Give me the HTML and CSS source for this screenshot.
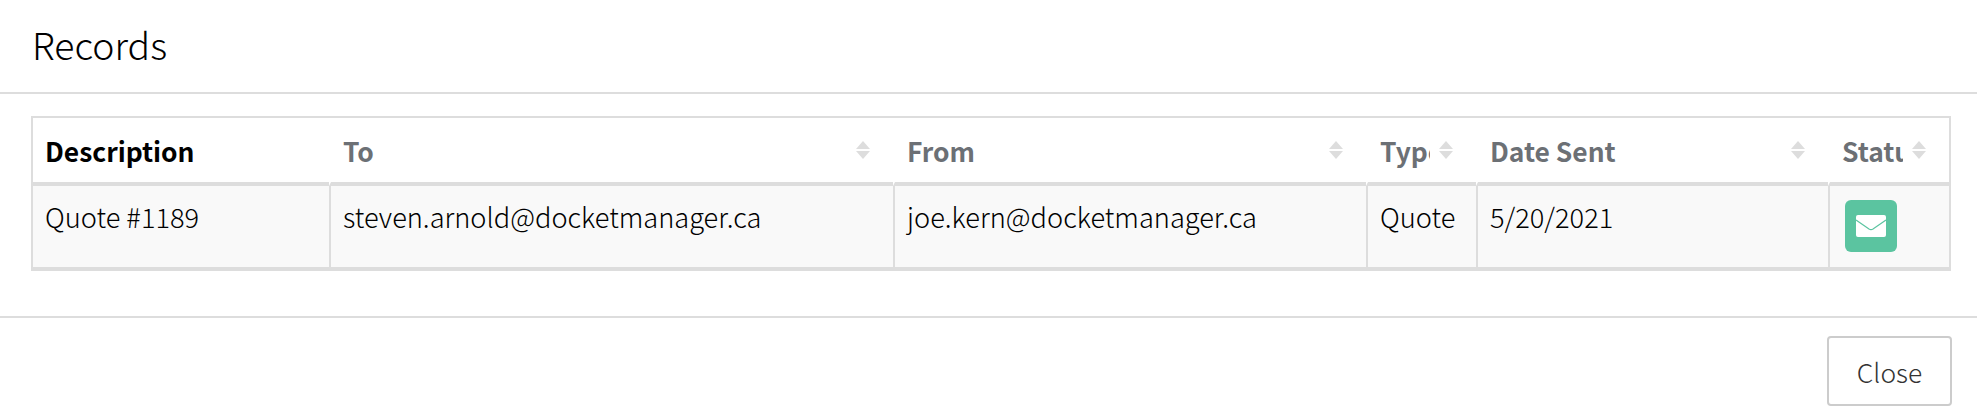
FILE: index.html
```html
<!DOCTYPE html>
<html lang="en">
<head>
<meta charset="UTF-8">
<meta name="viewport" content="width=device-width, initial-scale=1.0">
<title>Records</title>
<link rel="stylesheet" href="styles.css">
</head>
<body>

<div class="modal">
  <div class="modal-header">
    <h4>Records</h4>
  </div>
  <div class="modal-body">
    <table class="records">
      <colgroup>
        <col class="col-desc">
        <col class="col-to">
        <col class="col-from">
        <col class="col-type">
        <col class="col-date">
        <col class="col-status">
      </colgroup>
      <thead>
        <tr>
          <th class="plain"><span class="th-text">Description</span></th>
          <th class="sort"><span class="th-text">To</span></th>
          <th class="sort"><span class="th-text">From</span></th>
          <th class="sort"><span class="th-text">Type</span></th>
          <th class="sort"><span class="th-text">Date Sent</span></th>
          <th class="sort"><span class="th-text">Status</span></th>
        </tr>
      </thead>
      <tbody>
        <tr>
          <td>Quote #1189</td>
          <td>steven.arnold@docketmanager.ca</td>
          <td>joe.kern@docketmanager.ca</td>
          <td>Quote</td>
          <td>5/20/2021</td>
          <td>
            <span class="status-btn">
              <svg width="30" height="22" viewBox="0 0 30 22">
                <rect width="30" height="22" rx="2" fill="#fff"/>
                <path d="M0 5 L13 14 Q15 15.2 17 14 L30 5" fill="none" stroke="#5bc4a0" stroke-width="1.2"/>
              </svg>
            </span>
          </td>
        </tr>
      </tbody>
    </table>
  </div>
  <div class="modal-footer">
    <button type="button">Close</button>
  </div>
</div>

</body>
</html>
```

FILE: styles.css
```css
body {
  margin: 0;
  background-color: white;
  font-family: "Noto Sans CJK SC", "Source Sans Pro", sans-serif;
  font-weight: 300;
  color: #000;
}
.modal-header {
  box-sizing: border-box;
  padding: 20px 32px 0;
  border-bottom: 2px solid #ddd;
  height: 94px;
}
.modal-header h4 {
  margin: 0;
  font-size: 37.4px;
  line-height: 48px;
  font-weight: 300;
}
.modal-body {
  padding: 22px 26px 0 31px;
  height: 224px;
  box-sizing: border-box;
  border-bottom: 2px solid #ddd;
}
.records {
  width: 1920px;
  table-layout: fixed;
  border-collapse: separate;
  border-spacing: 0;
  border: 2px solid #ddd;
  border-bottom-width: 4px;
  font-size: 26.4px;
}
.col-desc { width: 296px; }
.col-to { width: 564px; }
.col-from { width: 473px; }
.col-type { width: 110px; }
.col-date { width: 352px; }
.records th {
  height: 68px;
  box-sizing: border-box;
  padding: 0 12px;
  text-align: left;
  font-weight: 700;
  color: #6c7075;
  border-left: 2px solid transparent;
  border-bottom: 4px solid #ddd;
  position: relative;
}
.records th.plain {
  color: #000;
  border-left: none;
}
.th-text {
  display: block;
  overflow: hidden;
  white-space: nowrap;
  margin-right: 34px;
}
.records th.plain .th-text {
  margin-right: 0;
}
.records th.sort::before,
.records th.sort::after {
  content: "";
  position: absolute;
  right: 23px;
  border-left: 7px solid transparent;
  border-right: 7px solid transparent;
}
.records th.sort::before {
  top: 23px;
  border-bottom: 8px solid #ddd;
}
.records th.sort::after {
  top: 33px;
  border-top: 8px solid #ddd;
}
.records td {
  height: 81px;
  padding: 14px 12px 0;
  box-sizing: border-box;
  vertical-align: top;
  background-color: #f9f9f9;
  border-left: 2px solid #ddd;
  font-size: 27.2px;
  line-height: 32px;
  white-space: nowrap;
  overflow: hidden;
}
.records td:first-child {
  border-left: none;
}
.status-btn {
  display: flex;
  align-items: center;
  justify-content: center;
  width: 52px;
  height: 52px;
  margin: 0 0 0 3px;
  border-radius: 6px;
  background-color: #5bc4a0;
}
.modal-footer {
  display: flex;
  justify-content: flex-end;
  padding: 18px 25px 0 0;
}
.modal-footer button {
  width: 125px;
  height: 70px;
  background-color: white;
  border: 2px solid #ccc;
  border-radius: 4px;
  font-family: inherit;
  font-weight: 300;
  font-size: 26.4px;
  color: #333;
}
```
